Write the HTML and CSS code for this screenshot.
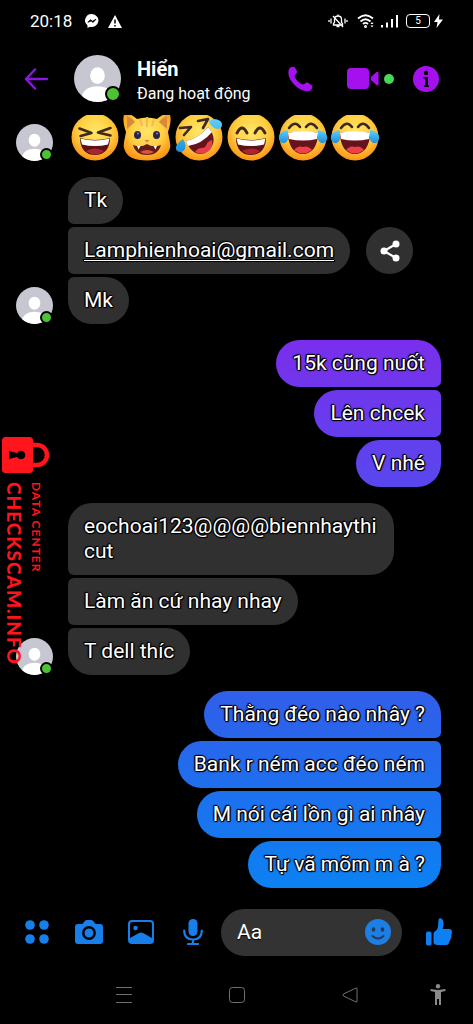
FILE: index.html
```html
<!DOCTYPE html>
<html lang="vi">
<head>
<meta charset="utf-8">
<meta name="viewport" content="width=device-width, initial-scale=1">
<title>Hiển</title>
<link rel="stylesheet" href="styles.css">
</head>
<body>
<svg class="defs" aria-hidden="true">
  <defs>
    <radialGradient id="face" cx="50%" cy="38%" r="62%">
      <stop offset="0" stop-color="#ffe768"/><stop offset=".55" stop-color="#ffd043"/><stop offset="1" stop-color="#fb9415"/>
    </radialGradient>
    <linearGradient id="tear" x1="0" y1="0" x2="0" y2="1">
      <stop offset="0" stop-color="#5fd0fb"/><stop offset="1" stop-color="#1b8fdd"/>
    </linearGradient>
    <clipPath id="round"><circle cx="24" cy="24" r="24"/></clipPath>
    <symbol id="person" viewBox="0 0 48 48">
      <g clip-path="url(#round)"><rect width="48" height="48" fill="#c6c7d0"/>
      <ellipse cx="24" cy="21" rx="7.5" ry="8.5" fill="#fff"/><path d="M7 48c0-11 7-16 17-16s17 5 17 16z" fill="#fff"/></g>
    </symbol>
    <g id="laugh-mouth">
      <path d="M9 25q15 4 30 0c0 11-6 17-15 17S9 36 9 25z" fill="#5e1118"/>
      <path d="M9.500 25.500q14.500 4 29 0l-1.500 6q-13 3-26 0z" fill="#fff"/>
      <path d="M15 38q9-5 18 0-9 7-18 0z" fill="#a9272c"/>
    </g>
    <g id="joy">
      <circle cx="24" cy="24" r="23.500" fill="url(#face)"/>
      <path d="M10 15q6-8 11-1M27 14q5-7 11 1" fill="none" stroke="#3d2723" stroke-width="2.600" stroke-linecap="round"/>
      <path d="M9 20q15-3 30 0c0 13-6 21-15 21S9 33 9 20z" fill="#64141a"/>
      <path d="M9 20q15-4 30 0l-1 6q-14 3-28 0z" fill="#fff"/>
      <path d="M15 37q4-5 9-3 5-2 9 3-9 7-18 0z" fill="#ec4148"/>
      <path d="M9 17C3 18-1 21 0 26c1 6 9 5 9-1zM39 17c6 1 10 4 9 9-1 6-9 5-9-1z" fill="url(#tear)"/>
    </g>
  </defs>
</svg>

<div class="phone">
  <div class="status">
    <span class="clock">20:18</span>
    <svg width="14" height="14" viewBox="0 0 14 14"><path d="M7 0a6.700 6.500 0 0 0-4.500 11.500V14l2.300-1.200A7 6.500 0 1 0 7 0z" fill="#fff"/><path d="M2.800 8.300l2.700-2.600 2 1.500 3.500-2-2.900 3.200-2-1.500z" fill="#000" stroke="#000" stroke-width=".8"/></svg>
    <svg class="warning" width="14" height="13" viewBox="0 0 14 13"><path d="M7 0l7 13H0z" fill="#fff"/><path d="M7 4.500v4M7 10v1.500" stroke="#000" stroke-width="1.500"/></svg>
    <span class="spacer"></span>
    <svg width="20" height="14" viewBox="0 0 20 14" fill="none" stroke="#fff" stroke-width="1.300"><path d="M5.500 11V9.500l1-1V5.500C6.500 3 8 2 10 2s3.500 1 3.500 3.500v3l1 1V11zM10 2V.5M8.500 12.500h3M5 2l10 11M3 4.500v5M1 6v2M17 4.500v5M19 6v2"/></svg>
    <svg class="wifi" width="18" height="14" viewBox="0 0 18 14" fill="none" stroke="#fff" stroke-width="1.800"><path d="M1 4.500q7.500-6.500 15 0M3.500 7.500q5-4.500 10 0M6 10q2.500-2.200 5 0"/><circle cx="8.500" cy="12.500" r=".6"/><path d="M13.500 10l1.500-2 1.500 2zM13.500 11.500l1.500 2 1.500-2z" fill="#fff" stroke="none"/></svg>
    <svg class="signal" width="18" height="14" viewBox="0 0 18 14" stroke="#fff" stroke-width="2"><path d="M2 11v2.500M7 8.500v5M12 5v8.500M17 1v12.500"/></svg>
    <span class="battery">5</span>
    <svg class="bolt" width="9" height="14" viewBox="0 0 9 14"><path d="M5.500 0L0 8h3.500L2.500 14 9 5.500H5z" fill="#fff"/></svg>
  </div>

  <header class="header">
    <button class="back" aria-label="Quay lại"><svg width="24" height="22" viewBox="0 0 24 22" fill="none" stroke="#8a16e0" stroke-width="2.500" stroke-linecap="round" stroke-linejoin="round"><path d="M23 11H2M11 1.500L2 11l9 9.500"/></svg></button>
    <span class="avatar avatar-lg"><svg><use href="#person"/></svg><i class="online"></i></span>
    <div class="who"><h1>Hiển</h1><p>Đang hoạt động</p></div>
    <button aria-label="Gọi"><svg width="26" height="26" viewBox="0 0 26 26"><path d="M2 3C4 .5 6.500 0 8 1.500l2 4C10.500 7 8 8.500 7.500 10c.5 3 5.500 8 8.500 8.500 1.500 0 3-2.500 4.500-2l4 2.500c1.500 1.500 1 4-1 5.500C15 28.500-2 14 2 3z" fill="#a511ee"/></svg></button>
    <button class="video" aria-label="Gọi video"><svg width="32" height="21" viewBox="0 0 32 21" fill="#a511ee"><rect width="22" height="21" rx="4"/><path d="M24 9l5.500-5Q31.500 3 31.500 5v11q0 2-2 1L24 12z"/></svg><i class="live"></i></button>
    <button class="info" aria-label="Thông tin"><svg width="26" height="26" viewBox="0 0 26 26"><circle cx="13" cy="13" r="13" fill="#a511ee"/><circle cx="13" cy="7" r="2.200"/><path d="M10.500 11H15v8.500h1V21h-5v-1.500h1v-7h-1.500z"/></svg></button>
  </header>

  <main class="chat">
    <section class="group">
      <span class="avatar"><svg><use href="#person"/></svg><i class="online"></i></span>
      <div class="emojis" role="img" aria-label="😆😺🤣😄😂😂">
        <svg viewBox="-1 0 50 48"><circle cx="24" cy="24" r="23.500" fill="url(#face)"/><path d="M8.500 15.500l12 4.500-11 3M39.500 15l-12.500 4.500 12.500 3" fill="none" stroke="#40281e" stroke-width="2.600" stroke-linejoin="round" stroke-linecap="round"/><use href="#laugh-mouth"/></svg>
        <svg viewBox="-1 0 50 48"><path d="M3 19C-1 8 0 0 3 0c4 0 8 4 11 6q10-3 20 0c3-2 7-6 11-6 3 0 4 8 0 19 1 6 3 12 2 16-2 9-11 12.500-23 12.500S3 44 1 35c-1-4 1-10 2-16z" fill="url(#face)"/><path d="M4 3q5 2 8 6l-8 7zM44 3q-5 2-8 6l8 7z" fill="#d9893a"/><path d="M17 6l2 7M24 4v10M31 6l-2 7" stroke="#f3b85c" stroke-width="2"/><ellipse cx="14.500" cy="22" rx="3.500" ry="4" fill="#29244b"/><ellipse cx="33.500" cy="22" rx="3.500" ry="4" fill="#29244b"/><circle cx="15" cy="20.500" r="1" fill="#8582b8"/><circle cx="34" cy="20.500" r="1" fill="#8582b8"/><path d="M21.500 27h5L24 29.500z" fill="#e8764d"/><path d="M10 32q8 3 14-1 6 4 14 1c-2 7-7 10-14 10s-12-3-14-10z" fill="#641b18"/><path d="M14 33l1.500 3.500 2-3.500M30.500 33l2 3.500L34 33" fill="#fff"/><path d="M17 39q7-4 14 0-7 4-14 0z" fill="#d95441"/></svg>
        <svg viewBox="-1 0 50 48"><circle cx="24" cy="24" r="23.500" fill="url(#face)"/><path d="M5 15l11-1-7 8M23 8l10-2-5 9" fill="none" stroke="#40281e" stroke-width="2.600" stroke-linejoin="round" stroke-linecap="round"/><path d="M11 28Q24 25 33 14c8 9 7 18 0 24s-17 3-22-10z" fill="#64141a"/><path d="M11 28Q24 25 33 14l4 5Q27 31 13 33z" fill="#fff"/><path d="M20 39c4-6 8-3 10-5s1-5 7-7c2 10-7 17-17 12z" fill="#e34047"/><path d="M34 8c4-3 12-2 13 3 1 7-10 7-13-3zM8 26c4 6 3 12-2 13-8 0-6-8 2-13z" fill="url(#tear)"/></svg>
        <svg viewBox="-1 0 50 48"><circle cx="24" cy="24" r="23.500" fill="url(#face)"/><path d="M10 20q5-10 10 0M28 20q5-10 10 0" fill="none" stroke="#40281e" stroke-width="2.800" stroke-linecap="round" stroke-linejoin="round"/><use href="#laugh-mouth"/></svg>
        <svg viewBox="-1 0 50 48"><use href="#joy"/></svg>
        <svg viewBox="-1 0 50 48"><use href="#joy"/></svg>
      </div>
    </section>

    <section class="group">
      <span class="avatar"><svg><use href="#person"/></svg><i class="online"></i></span>
      <div class="stack">
        <p class="bubble">Tk</p>
        <div class="row"><p class="bubble"><a href="mailto:Lamphienhoai@gmail.com">Lamphienhoai@gmail.com</a></p>
          <button class="share" aria-label="Chia sẻ"><svg width="20" height="22" viewBox="0 0 20 22"><path d="M16 4L4 11l12 7" fill="none" stroke="#fff" stroke-width="2.200"/><g fill="#fff"><circle cx="4" cy="11" r="3.500"/><circle cx="16" cy="4" r="3.500"/><circle cx="16" cy="18" r="3.500"/></g></svg></button></div>
        <p class="bubble">Mk</p>
      </div>
    </section>

    <section class="stack mine">
      <p class="bubble">15k cũng nuốt</p>
      <p class="bubble">Lên chcek</p>
      <p class="bubble">V nhé</p>
    </section>

    <section class="group">
      <span class="avatar"><svg><use href="#person"/></svg><i class="online"></i></span>
      <div class="stack">
        <p class="bubble">eochoai123@@@@biennhaythi<wbr>cut</p>
        <p class="bubble">Làm ăn cứ nhay nhay</p>
        <p class="bubble">T dell thíc</p>
      </div>
    </section>

    <section class="stack mine">
      <p class="bubble">Thằng đéo nào nhây ?</p>
      <p class="bubble">Bank r ném acc đéo ném</p>
      <p class="bubble">M nói cái lồn gì ai nhây</p>
      <p class="bubble">Tự vã mõm m à ?</p>
    </section>
  </main>

  <form class="composer">
    <button type="button" aria-label="Thêm"><svg width="24" height="24" viewBox="0 0 24 24" fill="#187fea"><circle cx="5" cy="5" r="4.800"/><circle cx="19" cy="5" r="4.800"/><circle cx="5" cy="19" r="4.800"/><circle cx="19" cy="19" r="4.800"/></svg></button>
    <button type="button" aria-label="Máy ảnh"><svg width="28" height="24" viewBox="0 0 28 24"><path d="M3 4h4q1 0 2-2 1-2 3-2h4q2 0 3 2t2 2h4q3 0 3 3v14q0 3-3 3H3q-3 0-3-3V7q0-3 3-3z" fill="#187fea"/><circle cx="14" cy="13" r="5.700" fill="#187fea" stroke="#000" stroke-width="2.400"/></svg></button>
    <button type="button" aria-label="Ảnh"><svg width="26" height="24" viewBox="0 0 26 24"><rect x="1" y="1" width="24" height="22" rx="3" fill="none" stroke="#187fea" stroke-width="2"/><circle cx="7.500" cy="8" r="2.200" fill="#187fea"/><path d="M2 18l9-5q2-1 4 0l9 5v5H2z" fill="#187fea"/></svg></button>
    <button type="button" aria-label="Ghi âm"><svg width="20" height="26" viewBox="0 0 20 26"><rect x="5.500" width="9" height="17" rx="4.500" fill="#187fea"/><path d="M1.200 11.500q0 9 8.800 9t8.800-9M10 21v4M5 25h10" fill="none" stroke="#187fea" stroke-width="2.200" stroke-linecap="round"/></svg></button>
    <div class="field">
      <input type="text" placeholder="Aa" aria-label="Tin nhắn">
      <button type="button" aria-label="Biểu tượng cảm xúc"><svg width="26" height="26" viewBox="0 0 26 26"><circle cx="13" cy="13" r="13" fill="#1d7ee3"/><ellipse cx="8.500" cy="10.500" rx="1.800" ry="2.300" fill="#243a58"/><ellipse cx="17.500" cy="10.500" rx="1.800" ry="2.300" fill="#243a58"/><path d="M7.500 17q5.500 5 11 0" fill="none" stroke="#243a58" stroke-width="2" stroke-linecap="round"/></svg></button>
    </div>
    <button class="like" type="button" aria-label="Thích"><svg width="26" height="28" viewBox="0 0 26 28" fill="#0d80f4"><rect y="13.500" width="5.500" height="14" rx="2"/><path d="M7.500 16q0-2 2-3c3-2 2.500-6 3-11 .5-3 4.500-2 5 2 .4 3-.5 5-.8 7H23q3 0 3 3 0 2-1 3 1 2-.5 4 0 2-1.500 3 0 3-3 3h-8q-5 0-4.500-4z"/></svg></button>
  </form>

  <nav class="nav">
    <button aria-label="Gần đây"><svg width="16" height="16" viewBox="0 0 16 16" stroke="#707070"><path d="M0 .5h16M0 7.500h16M0 15.500h16"/></svg></button>
    <button aria-label="Trang chủ"><svg width="16" height="16" viewBox="0 0 16 16"><rect x=".5" y=".5" width="15" height="15" rx="3" fill="none" stroke="#707070"/></svg></button>
    <button aria-label="Trở về"><svg width="16" height="16" viewBox="0 0 16 16"><path d="M14 1L1.500 7q-1 1 0 2L14 15q1 .3 1-1V2q0-1.300-1-1z" fill="none" stroke="#707070"/></svg></button>
    <button aria-label="Trợ năng"><svg width="16" height="22" viewBox="0 0 16 22" fill="#8a8a8a"><circle cx="8" cy="2.300" r="2.200"/><path d="M.5 5L8 6l7.500-1v2L11 8v13H9v-6H7v6H5V8L.5 7z"/></svg></button>
  </nav>

  <div class="watermark">
    <svg width="48" height="36" viewBox="0 0 48 36"><path d="M30 8h5a10 10 0 0 1 0 20h-5" fill="none" stroke="#ff151b" stroke-width="4.500"/><rect width="31" height="36" rx="3.500" fill="#ff151b"/><circle cx="19" cy="18" r="4.300"/><path d="M7 14l10 2.500v3L7 22z"/></svg>
    <div class="words"><span class="small">DATA CENTER</span><strong>CHECKSCAM.INFO</strong></div>
  </div>
</div>
</body>
</html>
```

FILE: styles.css
```css
* { box-sizing: border-box; }

body {
  margin: 0;
  background: #000;
  color: #fff;
  font-family: Roboto, "Noto Sans", sans-serif;
}

h1, p { margin: 0; }
svg { display: block; flex: none; }

button {
  display: flex;
  align-items: center;
  justify-content: center;
  padding: 0;
  border: 0;
  background: none;
}

.defs { position: absolute; width: 0; height: 0; }

.phone {
  position: relative;
  display: flex;
  flex-direction: column;
  height: 100vh;
  overflow: hidden;
}

/* System status bar */
.status {
  display: flex;
  align-items: center;
  flex: none;
  height: 42px;
  padding: 0 30px;
}
.clock { margin-right: 13px; font-size: 17px; font-weight: 400; }
.warning { margin-left: 9px; }
.spacer { flex: 1; }
.wifi { margin-left: 9px; }
.signal { margin-left: 5px; }
.battery {
  width: 24px;
  margin-left: 8px;
  border: 1px solid #fff;
  border-radius: 4px;
  font-size: 10px;
  line-height: 12px;
  text-align: center;
}
.bolt { margin-left: 4px; }

/* Conversation header */
.header {
  display: flex;
  align-items: center;
  flex: none;
  height: 73px;
  padding: 0 34px 0 12px;
}
.back { width: 48px; height: 48px; margin-right: 14px; }
.who { flex: 1; padding: 4px 0 0 16px; }
.who h1 { font-size: 20px; font-weight: 700; line-height: 26px; }
.who p { font-size: 16px; line-height: 24px; }
.video { gap: 5px; margin-left: 34px; }
.live { width: 10px; height: 10px; border-radius: 50%; background: #46d858; }
.info { margin-left: 19px; }

.avatar { position: relative; flex: none; width: 37px; height: 37px; }
.avatar svg { width: 100%; height: 100%; }
.avatar-lg { width: 47px; height: 47px; }
.online {
  position: absolute;
  right: 0;
  bottom: 0;
  width: 13px;
  height: 13px;
  border: 2px solid #000;
  border-radius: 50%;
  background: #4dc234;
}
.avatar-lg .online { width: 16px; height: 16px; }

/* Messages */
.chat {
  display: flex;
  flex: 1;
  flex-direction: column;
  justify-content: flex-end;
  gap: 16px;
  min-height: 0;
  padding: 0 32px 10px 16px;
  overflow: hidden;
}
.group { display: flex; align-items: flex-end; gap: 15px; }
.stack { display: flex; flex-direction: column; align-items: flex-start; gap: 3px; }
.row { display: flex; gap: 16px; }
.emojis { display: flex; gap: 2px; padding-left: 2px; }
.emojis svg { width: 50px; height: 48px; }

.bubble {
  max-width: 326px;
  padding: 11px 16px;
  border-radius: 6px 24px 24px 6px;
  background: #303030;
  font-size: 21px;
  line-height: 25px;
  text-shadow: 1px 0 1px #000, -1px 0 1px #000, 0 1px 1px #000, 0 -1px 1px #000,
    1px 1px 1px #000, -1px -1px 1px #000;
}
.bubble a { color: inherit; text-decoration-thickness: 1px; text-underline-offset: 3px; text-decoration-skip-ink: none; }
.stack > :first-child { border-top-left-radius: 24px; }
.stack > :last-child { border-bottom-left-radius: 24px; }

.mine { align-items: flex-end; }
.mine .bubble {
  border-radius: 24px 6px 6px 24px;
  background: linear-gradient(#7a2eeb 33%, #5a46ee 47%, #2c62ea 70%, #0d80f2 86%) fixed;
}
.mine > :first-child { border-top-right-radius: 24px; }
.mine > :last-child { border-bottom-right-radius: 24px; }

.share { width: 47px; height: 47px; border-radius: 50%; background: #303030; }

/* Composer */
.composer {
  display: flex;
  align-items: center;
  flex: none;
  height: 68px;
  padding: 0 8px 0 11px;
}
.composer > button { width: 52px; height: 48px; }
.field {
  display: flex;
  align-items: center;
  flex: 1;
  min-width: 0;
  height: 47px;
  margin: 0 11px 0 2px;
  padding: 0 11px 0 16px;
  border-radius: 24px;
  background: #333;
}
.field input {
  flex: 1;
  min-width: 0;
  padding: 0;
  border: 0;
  outline: 0;
  background: none;
  color: #fff;
  font: 21px/25px Roboto, "Noto Sans", sans-serif;
  text-shadow: 0 1px 1px #000;
}
.field input::placeholder { color: #fff; }

/* System navigation */
.nav {
  display: grid;
  grid-template-columns: 113fr 113fr 113fr 63fr;
  flex: none;
  height: 58px;
  padding: 0 4px 0 67px;
}

/* Vertical stamp laid over the conversation */
.watermark {
  position: absolute;
  top: 437px;
  left: 2px;
  color: #ff151b;
}
.words {
  display: flex;
  flex-direction: column;
  gap: 6px;
  width: 40px;
  margin-top: 9px;
  writing-mode: vertical-rl;
  font-family: Lato, sans-serif;
}
.small { font-size: 12px; font-weight: 700; line-height: 12px; letter-spacing: 1px; }
.words strong { font-size: 19px; font-weight: 900; line-height: 20px; letter-spacing: 1px; }
```
